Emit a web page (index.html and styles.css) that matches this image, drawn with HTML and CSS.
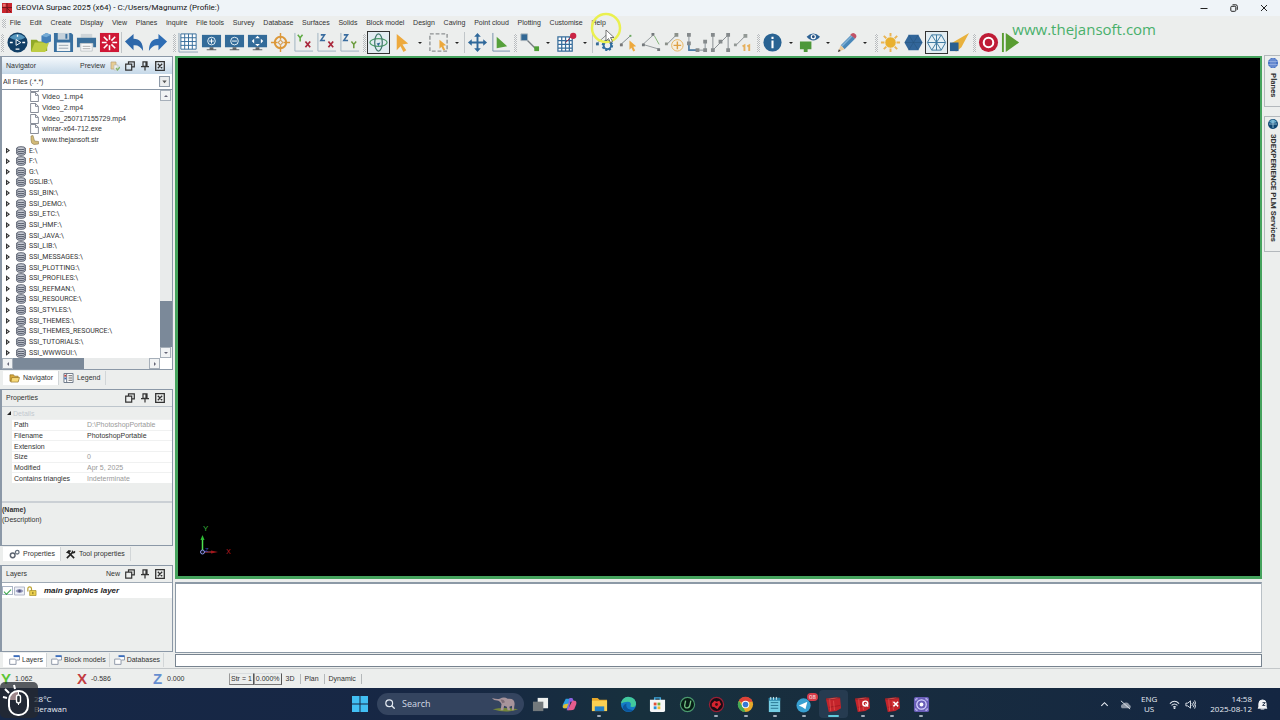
FILE: index.html
```html
<!DOCTYPE html>
<html lang="en">
<head>
    <meta charset="UTF-8">
    <meta name="viewport" content="width=device-width, initial-scale=1.0">
    <title>GEOVIA Surpac 2025</title>
    <link rel="stylesheet" href="styles.css">
</head>
<body>
    <!-- shared icons -->
    <svg class="sprite" aria-hidden="true">
        <symbol id="i-float" viewBox="0 0 10 10"><path d="M.7 3.2h6v6h-6zM3.5 3V.8h5.8v5H7M5 3.2h2" fill="none" stroke="#333" stroke-width="1.2"/></symbol>
        <symbol id="i-pin" viewBox="0 0 10 10"><path d="M3 .8h4v4.6H3zM1 5.7h8M5 5.7v3.8M6 1v4" fill="none" stroke="#333" stroke-width="1.2"/></symbol>
        <symbol id="i-close" viewBox="0 0 10 10"><path d="M.7.7h8.6v8.6H.7zM2.8 2.8l4.4 4.4M7.2 2.8L2.8 7.2" fill="none" stroke="#333" stroke-width="1.3"/></symbol>
        <symbol id="i-file" viewBox="0 0 9 10"><path d="M.6.5h5l2.8 2.8v6.2H.6zM5.5.6v2.8h2.8" fill="#fff" stroke="#6c7280" stroke-width=".8"/></symbol>
        <symbol id="i-str" viewBox="0 0 9 10"><path d="M1 1l2-.5L4.500 6l4 .5V9L4 9.500Q1 9 1 5z" fill="#d3bb78" stroke="#8f7c4b" stroke-width=".6"/></symbol>
        <symbol id="i-disk" viewBox="0 0 10 10"><path d="M.7 2.200q0-1.500 4.300-1.500t4.300 1.500v5.600q0 1.500-4.300 1.500T.7 7.800z" fill="#c6cad3"/><path d="M.7 2.200q0-1.500 4.300-1.500t4.300 1.500-4.300 1.500T.7 2.200v5.600q0 1.500 4.300 1.500t4.300-1.500V2.200M.7 4.200q0 1.500 4.300 1.500t4.300-1.500M.7 6q0 1.500 4.300 1.500T9.300 6" fill="none" stroke="#4c5262" stroke-width=".9"/></symbol>
        <symbol id="i-window" viewBox="0 0 12 11"><path d="M.7 4.500h7v5.800h-7z" fill="#fff" stroke="#8993a3"/><path d="M5 1h6.500v4.500H8" fill="#fff" stroke="#8993a3"/><path d="M5 .3h6.500v2H5z" fill="#3a6ec0"/></symbol>
        <symbol id="i-monitor" viewBox="0 0 22 22"><path d="M1 3h20v13H1z" fill="#336b99"/><path d="M9 16h4v2h3v1H6v-1h3z" fill="#606468"/></symbol>
        <symbol id="i-surpac" viewBox="0 0 18 18"><path d="M1 3l4 1 11-2 1 11-5 3-8 1z" fill="#c4242b"/><path d="M1 3l11-1.500 4 .5L5 4zM4 12l12-2" fill="#ef6a66" stroke="#8d151b" stroke-width=".6"/><path d="M5 4l1 12M9 5l1 10" stroke="#e95a55" stroke-width=".7"/></symbol>
    </svg>

    <header class="titlebar">
        <svg class="app-icon" viewBox="0 0 11 11"><path d="M0 0h11v11H0z" fill="#c9252e"/><path d="M0 5h11M5.500 0v11M5 5l5 5" stroke="#6d151a"/><path d="M1 1h3v3H1z" fill="#e86f6d"/></svg>
        <span class="title">GEOVIA Surpac 2025 (x64) - C:/Users/Magnumz (Profile:)</span>
        <div class="window-buttons">
            <button aria-label="Minimize"><svg viewBox="0 0 8 8"><path d="M.5 4.500h7" stroke="#222"/></svg></button>
            <button aria-label="Restore"><svg viewBox="0 0 8 8"><rect x=".8" y="2.300" width="5" height="5" rx="1" fill="none" stroke="#222"/><path d="M2.500.8h3.300q1.500 0 1.500 1.500v3.500" fill="none" stroke="#222"/></svg></button>
            <button aria-label="Close"><svg viewBox="0 0 8 8"><path d="M1 1l6 6M7 1L1 7" stroke="#222"/></svg></button>
        </div>
    </header>

    <nav class="menubar">
        <i class="handle"></i>
        <button>File</button><button>Edit</button><button>Create</button><button>Display</button><button>View</button><button>Planes</button><button>Inquire</button><button>File tools</button><button>Survey</button><button>Database</button><button>Surfaces</button><button>Solids</button><button>Block model</button><button>Design</button><button>Caving</button><button>Point cloud</button><button>Plotting</button><button>Customise</button><button>Help</button>
    </nav>

    <div class="toolbar">
        <div class="tools">
            <i class="handle"></i>
            <button aria-label="3DEXPERIENCE"><svg viewBox="0 0 22 22"><circle cx="11" cy="11" r="10.500" fill="#123f66"/><path d="M3 6a10 10 0 0 1 16 0q-8 5-16 0z" fill="#5596bd"/><path d="M9.500 8v6l5-3z" fill="none" stroke="#fff"/><path d="M3 11h3M16 11h3M11 3v2M9 18h4" stroke="#fff" stroke-width="1.400"/></svg></button>
            <button aria-label="Open"><svg viewBox="0 0 22 22"><path d="M1 8h6l2 2h9v10H1z" fill="#91a928"/><path d="M5 11h15l-4 10H1z" fill="#bfcd43"/><path d="M12 4l5-3 5 2v7l-5 2-5-2z" fill="#4580b9"/><path d="M12 4l5-3 5 2-5 2.500z" fill="#75aad5"/></svg></button>
            <button aria-label="Save"><svg viewBox="0 0 22 22"><path d="M1 1h18l2 2v18H1z" fill="#386f9f"/><path d="M5 1h12v7H5z" fill="#c5d1da"/><path d="M13 2h2v5h-2z" fill="#386f9f"/><path d="M4 11h14v9H4z" fill="#f0f3f4"/><path d="M6 14h10M6 17h10" stroke="#9aa7b0"/></svg></button>
            <button aria-label="Print"><svg viewBox="0 0 22 22"><path d="M5 2h12v4H5z" fill="#cfd5d8"/><path d="M1 6h20v10h-3v-4H4v4H1z" fill="#3a6f9b"/><path d="M5 12h12v8H5z" fill="#fafafa" stroke="#c0c6ca"/><path d="M7 15h8M7 17.500h8" stroke="#aaa"/></svg></button>
            <button aria-label="Reset graphics"><svg viewBox="0 0 22 22"><path d="M1 1h20v20H1z" fill="#cf1735"/><path d="M11 3v5M11 14v5M3 11h5M14 11h5M5 5l4 4M13 13l4 4M17 5l-4 4M9 13l-4 4" stroke="#fff" stroke-width="1.600"/></svg></button>
            <i class="sep"></i>
            <button aria-label="Undo"><svg viewBox="0 0 22 22"><path d="M1 10l9-8v5q10 0 10 13-4-7-10-6v5z" fill="#2e68aa"/></svg></button>
            <button aria-label="Redo"><svg viewBox="0 0 22 22"><path d="M21 10l-9-8v5Q2 7 2 20q4-7 10-6v5z" fill="#2e6db4"/></svg></button>
        </div>
        <div class="tools">
            <i class="handle"></i>
            <button aria-label="Grid"><svg viewBox="0 0 22 22"><path d="M3 2h16v16H3zM7 2v16M11 2v16M15 2v16M3 6h16M3 10h16M3 14h16" fill="#fff" stroke="#376d9b"/><path d="M1 1v20h20" fill="none" stroke="#8ea4b6"/></svg></button>
            <button aria-label="Zoom in"><svg viewBox="0 0 22 22"><use href="#i-monitor"/><circle cx="11" cy="9.500" r="4" fill="none" stroke="#e6f1f8"/><path d="M11 7v5M8.500 9.500h5" stroke="#fff"/></svg></button>
            <button aria-label="Zoom out"><svg viewBox="0 0 22 22"><use href="#i-monitor"/><circle cx="11" cy="9.500" r="4" fill="none" stroke="#e6f1f8"/><path d="M8.500 9.500h5" stroke="#fff"/></svg></button>
            <button aria-label="Zoom all"><svg viewBox="0 0 22 22"><use href="#i-monitor"/><path d="M11 4l2.500 2.500h-5zM11 15l2.500-2.500h-5zM5 9.500L7.500 7v5zM17 9.500L14.500 7v5z" fill="#fff"/></svg></button>
            <button aria-label="Centre view"><svg viewBox="0 0 22 22"><circle cx="11" cy="11" r="6" fill="none" stroke="#dc983a" stroke-width="2"/><circle cx="11" cy="11" r="2" fill="none" stroke="#cd862a"/><path d="M11 1v7M11 14v7M1 11h7M14 11h7" stroke="#dc983a" stroke-width="1.500"/></svg></button>
            <button aria-label="YX view"><svg viewBox="0 0 22 22"><path d="M2 1v19h19" fill="none" stroke="#9eb2c0"/><path d="M5 3l2.500 3L10 3M7.500 6v4" fill="none" stroke="#5eaa43" stroke-width="1.600"/><path d="M13 10l5 6M18 10l-5 6" stroke="#a9273b" stroke-width="1.800"/></svg></button>
            <button aria-label="ZX view"><svg viewBox="0 0 22 22"><path d="M2 1v19h19" fill="none" stroke="#9eb2c0"/><path d="M5 3h4L5 9h4.500" fill="none" stroke="#3a6da0" stroke-width="1.600"/><path d="M13 10l5 6M18 10l-5 6" stroke="#a9273b" stroke-width="1.800"/></svg></button>
            <button aria-label="ZY view"><svg viewBox="0 0 22 22"><path d="M2 1v19h19" fill="none" stroke="#9eb2c0"/><path d="M5 3h4L5 9h4.500" fill="none" stroke="#3a6da0" stroke-width="1.600"/><path d="M13 10l2.500 3 2.500-3M15.500 13v4" fill="none" stroke="#6b9c3d" stroke-width="1.600"/></svg></button>
        </div>
        <div class="tools">
            <i class="handle"></i>
            <button class="active" aria-label="Orbit"><svg viewBox="0 0 22 22"><ellipse cx="11" cy="11" rx="9" ry="4" fill="none" stroke="#4c9e69" stroke-width="1.300"/><ellipse cx="11" cy="11" rx="4" ry="9" fill="none" stroke="#43796e" stroke-width="1.300"/><path d="M9 12l4-1-2 4z" fill="#356b98"/></svg></button>
            <button aria-label="Select"><svg viewBox="0 0 22 22"><path d="M6 2l12 10-6 1 4 6-3 2-3-6-4 4z" fill="#eda93d"/></svg></button>
            <button class="drop" aria-label="Select options"></button>
            <button aria-label="Area select"><svg viewBox="0 0 22 22"><path d="M2 2h18v18H2z" fill="none" stroke="#8d9193" stroke-width="1.400" stroke-dasharray="4 2"/><path d="M12 8l7 6-3 .500 2 4-2 1-2-4-2 2z" fill="#eda93d"/></svg></button>
            <button class="drop" aria-label="Area options"></button>
            <i class="sep"></i>
            <button aria-label="Move"><svg viewBox="0 0 22 22"><path d="M11 1l3.500 4H12v5h5V7.500l4 3.500-4 3.500V12h-5v5h2.500L11 21l-3.500-4H10v-5H5v2.500L1 11l4-3.500V10h5V5H7.500z" fill="#2f689a"/></svg></button>
            <button aria-label="View plane"><svg viewBox="0 0 22 22"><path d="M3 1v19h18" fill="none" stroke="#7590aa"/><path d="M7 5l11 10-11 2z" fill="#56a13b"/></svg></button>
        </div>
        <div class="tools">
            <i class="handle"></i>
            <button aria-label="Snap"><svg viewBox="0 0 22 22"><path d="M5 5l13 13" stroke="#747b80" stroke-width="1.400"/><path d="M2 2h7v7H2z" fill="#326895" stroke="#a8b4bc"/><path d="M16 15h5v5h-5z" fill="#4fa037"/></svg></button>
            <button class="drop" aria-label="Snap options"></button>
            <button aria-label="Grid snap"><svg viewBox="0 0 22 22"><path d="M2 5h15v15H2zM6 5v15M10 5v15M14 5v15M2 9h15M2 13h15M2 17h15" fill="#fff" stroke="#376d9b" stroke-width="1.300"/><path d="M10 11l7-7" stroke="#a8324b"/><circle cx="18" cy="4" r="3.300" fill="#ca2544"/></svg></button>
            <button class="drop" aria-label="Grid options"></button>
            <i class="sep"></i>
            <button aria-label="Segment settings"><svg viewBox="0 0 22 22"><path d="M2 12L12 3" stroke="#828a8e"/><path d="M1 11h3v3H1z" fill="#396c97"/><circle cx="13" cy="14" r="4.500" fill="none" stroke="#316e9f" stroke-width="3" stroke-dasharray="2 1.500"/><circle cx="13" cy="14" r="4" fill="none" stroke="#316e9f" stroke-width="2"/></svg></button>
            <button aria-label="Segment select"><svg viewBox="0 0 22 22"><path d="M3 13L13 4" stroke="#828a8e"/><path d="M2 12h3v3H2z" fill="#777"/><path d="M12 3h2v2h-2z" fill="#67a65b"/><path d="M12 9l7 6-3 .500 2 4-2 1-2-4-2 2z" fill="#eda93d"/></svg></button>
            <button aria-label="Open segment"><svg viewBox="0 0 22 22"><path d="M13 3L2 13l17 5" fill="none" stroke="#919799"/><path d="M11 1h3v3h-3zM1 12h3v3H1zM17 17h3v3h-3z" fill="#74797c"/><path d="M14 4l5 9" stroke="#82b276"/></svg></button>
            <button aria-label="Add segment"><svg viewBox="0 0 22 22"><path d="M3 13L13 3" stroke="#828a8e"/><path d="M1 11h3v3H1zM11 1h4v4h-4z" fill="#8b918a"/><circle cx="14" cy="14" r="6" fill="#f5eee0" stroke="#e5b463"/><path d="M14 10v8M10 14h8" stroke="#dfa044" stroke-width="1.500"/></svg></button>
            <button aria-label="Join segment"><svg viewBox="0 0 22 22"><path d="M2 3v16h17V9" fill="none" stroke="#869097"/><path d="M2 12v7h9" fill="none" stroke="#4d7da7" stroke-width="1.600"/><path d="M0 1h4v4H0zM0 10h4v4H0zM9 17h4v4H9zM17 8h4v4h-4zM17 17h4v4h-4z" fill="#858a8c"/></svg></button>
            <button aria-label="Break segment"><svg viewBox="0 0 22 22"><path d="M3 19V3M19 3v16M3 19L19 3" fill="none" stroke="#858c90"/><path d="M1 1h4v4H1zM1 17h4v4H1zM9 8h4v4H9zM17 1h4v4h-4zM17 17h4v4h-4z" fill="#858a8c"/></svg></button>
            <button aria-label="Number points"><svg viewBox="0 0 22 22"><path d="M3 14L13 4" stroke="#858c90"/><path d="M1 12h3v3H1zM11 2h4v4h-4z" fill="#939996"/><path d="M10 15l2-1v6M15 15l2-1v6" fill="none" stroke="#e6b05e" stroke-width="2"/></svg></button>
        </div>
        <div class="tools">
            <i class="handle"></i>
            <button aria-label="Identify"><svg viewBox="0 0 22 22"><circle cx="11" cy="11" r="9.500" fill="#296393"/><path d="M11 9v8M11 5v2.300" stroke="#fff" stroke-width="2.200"/></svg></button>
            <button class="drop" aria-label="Identify options"></button>
            <button aria-label="Visibility"><svg viewBox="0 0 22 22"><path d="M1 10h12v8H1zM5 18h4v3H5z" fill="#4d9839"/><path d="M8 5q7-7 14 0-7 8-14 0z" fill="#2e6294"/><circle cx="15" cy="5" r="2.700" fill="#fff"/><circle cx="15" cy="5" r="1.500" fill="#244b78"/></svg></button>
            <button class="drop" aria-label="Visibility options"></button>
            <button aria-label="Edit"><svg viewBox="0 0 22 22"><path d="M5 14L16 3l4 4L9 18z" fill="#4a88b9"/><path d="M6 15L17 4" stroke="#82b1d5" stroke-width="1.600"/><path d="M5 14l4 4-7 3z" fill="#eccb9d"/><path d="M2 21l1-3 2 2z" fill="#333"/><path d="M15 3q3-4 6 0 1 2-1 4l-5-4z" fill="#c15367"/></svg></button>
            <button class="drop" aria-label="Edit options"></button>
        </div>
        <div class="tools">
            <i class="handle"></i>
            <button aria-label="Lighting"><svg viewBox="0 0 22 22"><path d="M11 1v20M1 11h20M4 4l14 14M18 4L4 18" stroke="#eab454" stroke-width="2"/><circle cx="11" cy="11" r="6" fill="#e9b02f" stroke="#eceeed"/></svg></button>
            <button aria-label="Solid render"><svg viewBox="0 0 22 22"><path d="M6 3h10l4.500 8-4.500 8H6l-4.500-8z" fill="#32669a"/><path d="M6 3l10 16M16 3L6 19M2 11h18" stroke="#27547e" stroke-width=".600"/></svg></button>
            <button class="active" aria-label="Wireframe"><svg viewBox="0 0 22 22"><path d="M6 3h10l4.500 8-4.500 8H6l-4.500-8zM6 3l10 16M16 3L6 19M2 11h18M11 3v16" fill="#e5f0f5" stroke="#3b779e"/></svg></button>
            <button aria-label="Clip"><svg viewBox="0 0 22 22"><path d="M21 1L2 12l6 1-1 8 6-5z" fill="#e8b13d"/><path d="M1 11h9v9H1z" fill="#295f91"/></svg></button>
        </div>
        <div class="tools">
            <i class="handle"></i>
            <button aria-label="Record"><svg viewBox="0 0 22 22"><circle cx="11" cy="11" r="10" fill="#bf1c36"/><circle cx="11" cy="11" r="5" fill="#bf1c36" stroke="#fff" stroke-width="2.200"/></svg></button>
            <button aria-label="Play"><svg viewBox="0 0 22 22"><path d="M2 1v20" stroke="#599c31" stroke-width="2"/><path d="M5 1v20l14-10z" fill="#599c31"/></svg></button>
        </div>
    </div>

    <main class="workspace">
        <aside class="sidebar">
            <section class="panel navigator">
                <div class="panel-head focused">
                    <h2>Navigator</h2>
                    <button>Preview</button>
                    <button class="tool" aria-label="Paste"><svg viewBox="0 0 10 10"><path d="M1 1h5v7H1z" fill="#e6cd94" stroke="#b9a276" stroke-width=".700"/><path d="M4 4h4v5H4z" fill="#eef1ed" stroke="#bbb" stroke-width=".700"/><path d="M6 7l1.500 2L10 6" fill="none" stroke="#82b56b" stroke-width="1.300"/></svg></button>
                    <button class="tool" aria-label="Float"><svg><use href="#i-float"/></svg></button>
                    <button class="tool" aria-label="Pin"><svg><use href="#i-pin"/></svg></button>
                    <button class="tool" aria-label="Close"><svg><use href="#i-close"/></svg></button>
                </div>
                <div class="filter">
                    <select aria-label="File filter"><option>All Files (.*.*)</option></select>
                    <svg viewBox="0 0 10 10"><path d="M.500.500h9v9h-9z" fill="#eceeef" stroke="#8e9aa8"/><path d="M3 4h4L5 6.500z" fill="#555"/></svg>
                </div>
                <div class="tree-area">
                    <ul class="tree">
                        <li class="file clipped"><svg><use href="#i-file"/></svg></li>
                        <li class="file"><svg><use href="#i-file"/></svg>Video_1.mp4</li>
                        <li class="file"><svg><use href="#i-file"/></svg>Video_2.mp4</li>
                        <li class="file"><svg><use href="#i-file"/></svg>Video_250717155729.mp4</li>
                        <li class="file"><svg><use href="#i-file"/></svg>winrar-x64-712.exe</li>
                        <li class="file"><svg><use href="#i-str"/></svg>www.thejansoft.str</li>
                        <li class="drive"><svg><use href="#i-disk"/></svg>E:\</li>
                        <li class="drive"><svg><use href="#i-disk"/></svg>F:\</li>
                        <li class="drive"><svg><use href="#i-disk"/></svg>G:\</li>
                        <li class="drive"><svg><use href="#i-disk"/></svg>GSLIB:\</li>
                        <li class="drive"><svg><use href="#i-disk"/></svg>SSI_BIN:\</li>
                        <li class="drive"><svg><use href="#i-disk"/></svg>SSI_DEMO:\</li>
                        <li class="drive"><svg><use href="#i-disk"/></svg>SSI_ETC:\</li>
                        <li class="drive"><svg><use href="#i-disk"/></svg>SSI_HMF:\</li>
                        <li class="drive"><svg><use href="#i-disk"/></svg>SSI_JAVA:\</li>
                        <li class="drive"><svg><use href="#i-disk"/></svg>SSI_LIB:\</li>
                        <li class="drive"><svg><use href="#i-disk"/></svg>SSI_MESSAGES:\</li>
                        <li class="drive"><svg><use href="#i-disk"/></svg>SSI_PLOTTING:\</li>
                        <li class="drive"><svg><use href="#i-disk"/></svg>SSI_PROFILES:\</li>
                        <li class="drive"><svg><use href="#i-disk"/></svg>SSI_REFMAN:\</li>
                        <li class="drive"><svg><use href="#i-disk"/></svg>SSI_RESOURCE:\</li>
                        <li class="drive"><svg><use href="#i-disk"/></svg>SSI_STYLES:\</li>
                        <li class="drive"><svg><use href="#i-disk"/></svg>SSI_THEMES:\</li>
                        <li class="drive"><svg><use href="#i-disk"/></svg>SSI_THEMES_RESOURCE:\</li>
                        <li class="drive"><svg><use href="#i-disk"/></svg>SSI_TUTORIALS:\</li>
                        <li class="drive"><svg><use href="#i-disk"/></svg>SSI_WWWGUI:\</li>
                    </ul>
                    <div class="scroll vertical"><button aria-label="Scroll up"></button><i class="thumb"></i><button class="end" aria-label="Scroll down"></button></div>
                    <div class="scroll horizontal"><button aria-label="Scroll left"></button><i class="thumb"></i><button class="end" aria-label="Scroll right"></button></div>
                </div>
            </section>
            <div class="tabs">
                <button class="current"><svg viewBox="0 0 12 11"><path d="M1 2h4l1 1.500h4V9H1z" fill="#d9aa3b" stroke="#8f6d22" stroke-width=".700"/><path d="M3 5h8.500L10 10H2z" fill="#f7d979" stroke="#8f6d22" stroke-width=".700"/></svg>Navigator</button>
                <button><svg viewBox="0 0 12 11"><path d="M1 .500h10v10H1zM4 .500v10" fill="#fff" stroke="#627080"/><path d="M6 3h4M6 5.500h4M6 8h4" stroke="#555"/><path d="M1.500 2h2v2h-2z" fill="#c43a37"/><path d="M1.500 5h2v2h-2z" fill="#3c67b4"/></svg>Legend</button>
            </div>

            <section class="panel properties">
                <div class="panel-head">
                    <h2>Properties</h2>
                    <button class="tool" aria-label="Float"><svg><use href="#i-float"/></svg></button>
                    <button class="tool" aria-label="Pin"><svg><use href="#i-pin"/></svg></button>
                    <button class="tool" aria-label="Close"><svg><use href="#i-close"/></svg></button>
                </div>
                <div class="details-title">Details</div>
                <table>
                    <tr><th>Path</th><td>D:\PhotoshopPortable</td></tr>
                    <tr><th>Filename</th><td class="editable">PhotoshopPortable</td></tr>
                    <tr><th>Extension</th><td></td></tr>
                    <tr><th>Size</th><td>0</td></tr>
                    <tr><th>Modified</th><td>Apr 5, 2025</td></tr>
                    <tr><th>Contains triangles</th><td>Indeterminate</td></tr>
                </table>
                <div class="description"><strong>(Name)</strong><p>(Description)</p></div>
            </section>
            <div class="tabs">
                <button class="current"><svg viewBox="0 0 12 11"><circle cx="4" cy="7" r="2.600" fill="none" stroke="#5d6570" stroke-width="1.600"/><circle cx="9" cy="3.500" r="2" fill="none" stroke="#66717e" stroke-width="1.400"/></svg>Properties</button>
                <button><svg viewBox="0 0 12 11"><path d="M2 10l7-7M3 3l7 7" stroke="#222" stroke-width="1.800"/><path d="M1 4l3-3 3 1-3 3zM8 1l1 2 2-1q1 3-2 3L7 4z" fill="#222"/></svg>Tool properties</button>
            </div>

            <section class="panel layers">
                <div class="panel-head">
                    <h2>Layers</h2>
                    <button>New</button>
                    <button class="tool" aria-label="Float"><svg><use href="#i-float"/></svg></button>
                    <button class="tool" aria-label="Pin"><svg><use href="#i-pin"/></svg></button>
                    <button class="tool" aria-label="Close"><svg><use href="#i-close"/></svg></button>
                </div>
                <div class="layer">
                    <input type="checkbox" id="main-layer" checked>
                    <svg viewBox="0 0 11 9"><path d="M.500.500h10v8H.500z" fill="#edf0f7" stroke="#b3b8c8"/><path d="M1.500 4.500q4-4 8 0-4 4-8 0z" fill="#8d90b8"/><circle cx="5.500" cy="4.500" r="1.300" fill="#54567f"/></svg>
                    <svg viewBox="0 0 11 11"><path d="M1.500 6V3q0-2 2-2t2 2v3" fill="none" stroke="#b8a02c" stroke-width="1.300"/><path d="M3.500 5h7v5.500h-7z" fill="#ecd151" stroke="#a68f25" stroke-width=".800"/><path d="M7 6.500v2.500" stroke="#705f17"/></svg>
                    <label for="main-layer">main graphics layer</label>
                </div>
            </section>
            <div class="tabs narrow">
                <button class="current"><svg><use href="#i-window"/></svg>Layers</button>
                <button><svg><use href="#i-window"/></svg>Block models</button>
                <button><svg><use href="#i-window"/></svg>Databases</button>
            </div>
        </aside>

        <section class="stage">
            <div class="viewport">
                <svg class="axes" viewBox="0 0 40 40">
                    <text x="8" y="9" class="axis-y">Y</text>
                    <path d="M7.500 29V16" stroke="#4ee04e" stroke-width="1.500"/><path d="M5.500 18l2-5 2 5z" fill="#2fba35"/>
                    <path d="M9 30h8" stroke="#c9474c"/><path d="M16 28.500l7 1.500-7 1.500z" fill="#a3171c"/>
                    <circle cx="7.500" cy="30" r="2" fill="#112" stroke="#8a96e8"/>
                    <text x="10" y="30" class="axis-z">Z</text>
                    <text x="31" y="32" class="axis-x">X</text>
                </svg>
            </div>
            <div class="messages" role="log"></div>
            <input class="command" type="text" aria-label="Command">
        </section>

        <nav class="side-tabs">
            <button><svg viewBox="0 0 10 10"><path d="M3 0h4l3 3v4l-3 3H3L0 7V3z" fill="#4d76c5"/><path d="M3 1v8M5 0v10M7 1v8M0 3.500h10M0 6.500h10" stroke="#a9bee8" stroke-width=".600"/></svg>Planes</button>
            <button><svg viewBox="0 0 10 10"><circle cx="5" cy="5" r="5" fill="#0f4672"/><path d="M1 3q4-5 8 0-4 2-8 0z" fill="#67aacb"/><path d="M1 5h8M5 1v8" stroke="#a9d2e4" stroke-width=".800"/></svg>3DEXPERIENCE PLM Services</button>
        </nav>
    </main>

    <footer class="statusbar">
        <div class="coord"><b class="y">Y</b>1.062</div>
        <div class="coord"><b class="x">X</b>-0.586</div>
        <div class="coord"><b class="z">Z</b>0.000</div>
        <button class="raised">Str = 1</button><button class="raised">0.000%</button>
        <span class="mode">3D</span><span class="mode">Plan</span><span class="mode">Dynamic</span>
    </footer>

    <div class="taskbar">
        <div class="weather"><span>28°C</span><span>Berawan</span></div>
        <div class="apps">
            <button class="start" aria-label="Start"><svg viewBox="0 0 16 16"><path d="M0 0h7.500v7.500H0zM8.500 0H16v7.500H8.500zM0 8.500h7.500V16H0zM8.500 8.500H16V16H8.500z" fill="#42bff3"/></svg></button>
            <div class="search">
                <svg viewBox="0 0 10 10"><circle cx="4.200" cy="4.200" r="3.400" fill="none" stroke="#e2e8f0" stroke-width="1.200"/><path d="M6.700 6.700l3 3" stroke="#e2e8f0" stroke-width="1.300"/></svg>
                <input type="text" placeholder="Search" aria-label="Search">
                <svg class="elephant" viewBox="0 0 32 18"><path d="M2 15q12-3 29 0-13 5-29 0z" fill="#76883a"/><path d="M1 2q6 2 9 1 5-3 9 0 8-1 8 6l-1 7h-2v-5l-3 1 1 4h-3l-1-4-3-1-1 5h-3l1-7q-2-4-5-4Q3 5 1 2z" fill="#a8949b"/><path d="M11 4q4-1 5 3l-3 1z" fill="#7f6d78"/></svg>
            </div>
            <div class="pinned">
                <button aria-label="Task view"><svg viewBox="0 0 18 18"><path d="M6 2h11v11H6z" fill="#eef0ef"/><path d="M1 6h11v10H1z" fill="#73797c"/></svg></button>
                <button aria-label="Copilot"><svg viewBox="0 0 18 18"><path d="M5 3h5L7 13H3Q1 13 2 9z" fill="#2d9de1"/><path d="M9 2h3l2 4h-4L8 15H6z" fill="#8c62e0"/><path d="M12 5h3q2 1 1 4l-2 5q-1 1-4 1H7z" fill="#e65c8d"/><path d="M3 9l5-1-2 5H3q-2-1 0-4z" fill="#e2bd33"/></svg></button>
                <button class="open" aria-label="File Explorer"><svg viewBox="0 0 18 18"><path d="M1 2h6l2 2h8v12H1z" fill="#e8a92a"/><path d="M1 5h16v11H1z" fill="#fad052"/><path d="M4 11h10v5H4z" fill="#2582c7"/></svg></button>
                <button aria-label="Edge"><svg viewBox="0 0 18 18"><circle cx="9" cy="9" r="8" fill="#147bc5"/><path d="M1 8q2-8 9-7 7 1 7 8-1 4-6 2 2-5-3-5-4 0-7 2z" fill="#42c89c"/><path d="M7 8q-2 6 7 7-7 4-11-2 0-4 4-5z" fill="#0c559d"/></svg></button>
                <button aria-label="Store"><svg viewBox="0 0 18 18"><path d="M6 5V2h6v3" fill="none" stroke="#3fa7dd" stroke-width="1.500"/><path d="M1 4h16v11q0 2-2 2H3q-2 0-2-2z" fill="#f5f6f7"/><path d="M5 7h3v3H5z" fill="#e25238"/><path d="M9 7h3v3H9z" fill="#72ae3c"/><path d="M5 11h3v3H5z" fill="#288fd4"/><path d="M9 11h3v3H9z" fill="#eebc34"/></svg></button>
                <button aria-label="Uninstaller"><svg viewBox="0 0 18 18"><circle cx="9" cy="9" r="7.500" fill="#071d16" stroke="#4a996e" stroke-width="1.200"/><path d="M7 5l-1 5q0 3 3 2.500 2 0 2.500-2.500l1-5" fill="none" stroke="#75c484" stroke-width="1.400"/></svg></button>
                <button class="open" aria-label="Recorder"><svg viewBox="0 0 18 18"><circle cx="9" cy="9" r="7.500" fill="#180c14" stroke="#982036" stroke-width="1.300"/><path d="M4 8l3-3 2 1 3-1 2 4-2 2-2 3-3-2-3-1z" fill="#d5232f"/><circle cx="9" cy="9" r="1.500" fill="#3b0d13"/></svg></button>
                <button class="open" aria-label="Chrome"><svg viewBox="0 0 18 18"><circle cx="9" cy="9" r="8" fill="#e6a92a"/><path d="M2 5a8 8 0 0 1 14.500 1H9v3z" fill="#dc4238"/><path d="M2 5l5 8 2 4A8 8 0 0 1 2 5z" fill="#43a957"/><circle cx="9" cy="9" r="4" fill="#fff"/><circle cx="9" cy="9" r="3" fill="#3778d5"/></svg></button>
                <button class="open" aria-label="Notepad"><svg viewBox="0 0 18 18"><path d="M3 2h12v15H3z" fill="#75cee4"/><path d="M3 2h12v3H3z" fill="#2d87aa"/><path d="M5 7h8M5 10h8M5 13h8" stroke="#28758f"/><path d="M5 1v3M8 1v3M11 1v3" stroke="#d1edf4"/></svg></button>
                <button class="open" aria-label="Telegram"><svg viewBox="0 0 18 18"><circle cx="8" cy="10" r="7.500" fill="#38a0d1"/><path d="M3 10l9-4-2 8-3-2z" fill="#fff"/></svg><span class="badge">08</span></button>
                <button class="open selected" aria-label="Surpac"><svg><use href="#i-surpac"/></svg></button>
                <button class="open" aria-label="Surpac Quarry"><svg viewBox="0 0 18 18"><use href="#i-surpac"/><circle cx="12" cy="8" r="2.600" fill="none" stroke="#fff" stroke-width="1.500"/><path d="M12 8l3 3" stroke="#fff" stroke-width="1.500"/></svg></button>
                <button class="open" aria-label="Surpac X"><svg viewBox="0 0 18 18"><use href="#i-surpac"/><path d="M10 6l5 5M15 6l-5 5" stroke="#fff" stroke-width="1.600"/></svg></button>
                <button class="open" aria-label="Capture"><svg viewBox="0 0 18 18"><rect x="1" y="1" width="16" height="16" rx="2" fill="#695eb8"/><circle cx="9" cy="9" r="5" fill="none" stroke="#d8d5ff" stroke-width="1.300"/><circle cx="9" cy="9" r="2" fill="#fff"/><path d="M3 5V3h2M13 3h2v2M15 13v2h-2M5 15H3v-2" fill="none" stroke="#d8d5ff"/></svg></button>
            </div>
        </div>
        <div class="tray">
            <svg viewBox="0 0 12 12"><path d="M2.500 7.500L6 4l3.500 3.500" fill="none" stroke="#e6ebf2" stroke-width="1.200"/></svg>
            <svg class="cloud" viewBox="0 0 12 12"><path d="M2 10q-2-2 0-4 2-1 3-2 4-1 5 2 3 2 1 4z" fill="#8c96a5"/><path d="M1 2l10 9" stroke="#e6ebf2"/></svg>
            <div class="lang">ENG<br>US</div>
            <svg viewBox="0 0 12 12"><path d="M1 5q5-5 10 0M2.800 7q3.200-3 6.400 0M4.500 8.800q1.500-1.300 3 0" fill="none" stroke="#e6ebf2" stroke-width="1.100"/><circle cx="6" cy="10" r="1" fill="#e6ebf2"/></svg>
            <svg viewBox="0 0 12 12"><path d="M1 4.500h2L6 2v8L3 7.500H1zM7.500 4.500q1.500 1.500 0 3M9 3q2.500 3 0 6M10.500 1.500q3 4.500 0 9" fill="none" stroke="#e6ebf2"/></svg>
            <div class="clock">14:58<br>2025-08-12</div>
            <svg viewBox="0 0 12 12"><path d="M2 9V5q0-4 4-4t4 4v4l1 1H1zM4 11h4" fill="#f2f4f7" stroke="#f2f4f7"/><path d="M6 4h3L6 7h3" fill="none" stroke="#172740"/></svg>
        </div>
    </div>

    <div class="watermark">www.thejansoft.com</div>
    <svg class="pointer" viewBox="0 0 32 32"><circle cx="16" cy="16" r="14" fill="none" stroke="#eaf04f" stroke-width="2.500"/><path d="M16 18v11l2.500-2.500 2 4 2-1-2-4h3.500z" fill="#fff" stroke="#555" stroke-width=".800"/></svg>
    <svg class="click-hint" viewBox="0 0 38 38"><rect width="38" height="36" rx="5" fill="#252a30" fill-opacity=".75"/><path d="M10 16q1-6 8-7v9h-8z" fill="#9c8589"/><rect x="9" y="9" width="19" height="24" rx="9" fill="none" stroke="#fff" stroke-width="2"/><path d="M18.500 9v4M18.500 20v3" stroke="#fff"/><rect x="16.500" y="13" width="4" height="8" rx="2" fill="#252a30" stroke="#fff" stroke-width="1.400"/><path d="M3 15l4 1M5 7l4 4M14 3l1 4" stroke="#fff" stroke-width="2"/></svg>
</body>
</html>
```
FILE: styles.css
```css
* { margin: 0; padding: 0; box-sizing: border-box; }
body { display: flex; flex-direction: column; height: 100vh; min-height: 720px; overflow: hidden; position: relative; background: #eceeed; color: #333; font-family: "Liberation Sans", Arial, sans-serif; font-size: 7px; line-height: 10px; }
button, input, select { font: inherit; color: inherit; background: none; border: none; }
svg { display: block; flex-shrink: 0; }
.sprite { position: absolute; width: 0; height: 0; }

.titlebar { display: flex; align-items: center; height: 16px; padding-left: 2px; background: #eff4f8; }
.app-icon { width: 10px; height: 10px; margin-right: 4px; }
.title { font-family: Roboto, sans-serif; font-size: 8px; color: #111; }
.window-buttons { display: flex; margin-left: auto; }
.window-buttons button { display: flex; justify-content: center; width: 30px; padding-right: 2px; }
.window-buttons svg { width: 8px; height: 8px; }

.menubar { display: flex; align-items: center; justify-content: space-between; width: 606px; height: 14px; padding-left: 2px; }
.menubar button { white-space: nowrap; }
.handle { flex: none; width: 3px; height: 18px; margin: 0 1px; background: repeating-conic-gradient(#b8bcbe 0 25%, #f1f2f2 0 50%) 0 0 / 2px 2px; }
.menubar .handle { width: 4px; height: 9px; margin: 0 -5px 0 0; }

.toolbar { display: grid; grid-template-columns: 172px 190px 151px 243px 118px 98px 1fr; height: 25px; }
.tools { display: flex; align-items: center; }
.tools:first-child .handle { margin-right: 2px; }
.tools button { display: flex; flex: none; align-items: center; justify-content: center; width: 23px; height: 23px; }
.tools svg { width: 21px; height: 21px; }
.tools .active { border: 1px solid #333; background: #e2ecf1; }
.tools .drop { width: 14px; }
.drop::after { content: ""; border: 2px solid transparent; border-top-color: #222; border-bottom: 0; }
.sep { flex: none; width: 1px; height: 21px; margin-right: 1px; background: #c1c6c9; }

.workspace { display: grid; grid-template-columns: 173px 1fr 16px; flex: 1; gap: 2px; min-height: 0; }
.sidebar { display: flex; flex-direction: column; min-width: 0; padding-top: 1px; }
.panel { display: flex; flex-direction: column; border: 1px solid #8b98a7; border-left-width: 2px; }
.navigator { flex: 1; min-height: 0; }
.panel-head { display: flex; flex: none; align-items: center; gap: 5px; height: 17px; padding: 0 7px 0 4px; }
.panel-head.focused { background: linear-gradient(#f5f9fc, #c5d8e8); }
.panel-head h2 { margin-right: auto; font-size: 7px; font-weight: normal; }
.panel-head svg { width: 10px; height: 10px; }

.filter { position: relative; flex: none; height: 16px; border-bottom: 1px solid #8996a5; background: #fff; }
.filter select { width: 100%; height: 15px; padding-left: 1px; appearance: none; }
.filter svg { position: absolute; top: 2px; right: 2px; width: 11px; height: 11px; pointer-events: none; }
.tree-area { display: grid; grid-template: 1fr 11px / 1fr 12px; flex: 1; min-height: 0; background: #fff; }
.tree { display: flex; flex-direction: column; overflow: hidden; list-style: none; }
.tree li { display: flex; flex: 1; align-items: center; min-height: 0; white-space: nowrap; }
.tree .clipped { flex: none; align-items: flex-end; height: 2px; overflow: hidden; }
.file { gap: 3px; padding-left: 28px; }
.file svg { width: 9px; height: 10px; }
.drive { gap: 3px; padding-left: 4px; font-family: Roboto, sans-serif; }
.drive svg { width: 10px; height: 10px; }
.drive::before { content: ""; width: 4px; height: 6px; margin-right: 3px; background: #333; clip-path: polygon(0 0, 100% 50%, 0 100%, 0 0, 1px 2px, 1px 4px, 2px 3px, 1px 2px); }
.scroll { display: flex; background: #e9ebeb; }
.scroll button { display: flex; flex: none; align-items: center; justify-content: center; width: 11px; height: 11px; border: 1px solid #a6afb9; background: #f1f3f4; }
.scroll button::after { content: ""; border: 2px solid transparent; border-top: 0; border-bottom-color: #667; }
.scroll .end { margin-top: auto; }
.scroll .thumb { background: #7b8999; }
.vertical { flex-direction: column; }
.vertical .thumb { height: 17%; margin-top: auto; }
.vertical .end { margin-top: 0; }
.vertical .end::after { transform: rotate(180deg); }
.horizontal .thumb { width: 45%; }
.horizontal .end { margin: 0 0 0 auto; }
.horizontal button::after { transform: rotate(-90deg); }
.horizontal .end::after { transform: rotate(90deg); }

.tabs { display: flex; flex: none; height: 14px; margin: 1px 0 4px 3px; }
.tabs button { display: flex; align-items: center; gap: 3px; padding: 0 5px 0 6px; border-right: 1px solid #d2d6d8; white-space: nowrap; }
.tabs .current { background: #fff; }
.tabs svg { width: 11px; height: 10px; }
.tabs button + button { padding-left: 4px; }
.tabs.narrow { margin-bottom: 1px; }
.tabs.narrow button { gap: 2px; padding-right: 3px; }

.properties { height: 157px; }
.properties .panel-head { border-bottom: 1px solid #bdc5cc; }
.details-title { height: 12px; padding-left: 11px; color: #c3c9cf; position: relative; line-height: 13px; }
.details-title::before { content: ""; position: absolute; left: 5px; top: 4px; border: 2px solid transparent; border-right-color: #222; border-bottom-color: #222; }
.properties table { flex: none; height: 64px; margin-left: 10px; background: #fff; border-collapse: collapse; line-height: 9px; }
.properties th { width: 74px; padding-left: 2px; font-weight: normal; text-align: left; border-top: 1px solid #f0f1f1; }
.properties td { padding-left: 1px; color: #999; border-top: 1px solid #f0f1f1; }
.properties .editable { color: #333; }
.description { height: 44px; margin-top: auto; border-top: 2px solid #cbd0d5; padding-top: 2px; }

.layers { height: 87px; }
.layers .panel-head { border-bottom: 1px solid #9faab5; }
.layer { display: flex; align-items: center; height: 15px; gap: 1px; background: #fff; }
.layer input { display: grid; place-items: center; width: 11px; height: 9px; border: 1px solid #aab5c6; appearance: none; background: #fff; }
.layer input:checked::before { content: ""; width: 6px; height: 3px; border: solid #35a447; border-width: 0 0 1px 1px; transform: rotate(-45deg); }
.layer svg { width: 11px; height: 10px; }
.layer label { margin-left: 6px; font-size: 8px; font-style: italic; font-weight: bold; color: #222; }

.stage { display: flex; flex-direction: column; min-width: 0; padding-top: 1px; }
.viewport { position: relative; flex: 1; border: 3px solid #45a35d; border-width: 2px 2px 3px 3px; background: #000; }
.axes { position: absolute; left: 17px; bottom: 14px; width: 40px; height: 40px; overflow: visible; }
.axis-y { fill: #37b43b; font-size: 8px; }
.axis-z { fill: #3f48bd; font-size: 6px; }
.axis-x { fill: #c01d23; font-size: 7px; }
.messages { height: 71px; margin-top: 3px; border: 1px solid #8c99a6; border-top-width: 2px; border-right-color: #b9c0c6; background: #fff; }
.command { width: 100%; height: 13px; margin: 1px 0; padding: 0 3px; border: 1px solid #77838f; background: #fff; }

.side-tabs { display: flex; flex-direction: column; gap: 9px; }
.side-tabs button { display: flex; align-items: center; gap: 5px; width: 16px; padding: 2px 0 9px; border: 1px solid #b3b8bc; border-right: 0; writing-mode: vertical-rl; font-family: Roboto, sans-serif; font-weight: bold; font-size: 8px; }
.side-tabs svg { width: 10px; height: 10px; }

.statusbar { display: flex; align-items: center; height: 20px; border-top: 1px solid #c3c7c9; padding-left: 1px; white-space: nowrap; }
.coord { display: flex; align-items: center; gap: 3px; width: 76px; }
.coord b { width: 11px; font-size: 15px; }
.coord .y { color: #5dc536; }
.coord .x { color: #c23c42; }
.coord .z { color: #668ed0; }
.raised { height: 12px; padding: 0 1px; border: 1px solid; border-color: #d9dddf #555 #777 #999; }
.mode { padding: 0 5px 0 4px; border-right: 1px solid #b4b8ba; }

.taskbar { display: grid; grid-template-columns: 1fr auto 1fr; align-items: center; height: 32px; background: linear-gradient(90deg, #162746, #172744 35%, #17303d 50%, #182d3e 65%, #142642); color: #e8edf4; font-family: "Open Sans", "Noto Sans", sans-serif; font-size: 8px; line-height: 10px; }
.weather { display: flex; flex-direction: column; padding-left: 34px; }
.apps { display: flex; align-items: center; padding-left: 4px; }
.start { width: 25px; padding-left: 4px; }
.start svg { width: 16px; height: 16px; }
.search { display: flex; align-items: center; gap: 7px; width: 147px; height: 22px; margin: 0 2px 0 4px; padding: 0 5px 0 8px; border-radius: 11px; background: #34445f; }
.search svg { width: 10px; height: 10px; }
.search .elephant { width: 28px; height: 18px; }
.search input { flex: 1; min-width: 0; font-size: 9px; }
.search input::placeholder { color: #d3dae5; opacity: 1; }
.pinned { display: grid; grid-template-columns: repeat(14, 1fr); width: 410px; }
.pinned button { position: relative; display: grid; place-items: center; height: 28px; }
.pinned svg { width: 17px; height: 17px; }
.open::after { content: ""; position: absolute; bottom: 1px; width: 4px; height: 2px; border-radius: 1px; background: #a2adba; }
.selected { border-radius: 4px; background: #263b50; }
.selected::after { width: 11px; background: #61cbdc; }
.badge { position: absolute; top: 3px; right: 1px; padding: 0 2px; border-radius: 4px; background: #d63b48; color: #fff; font-size: 6px; line-height: 8px; }
.tray { display: flex; align-items: center; justify-content: flex-end; gap: 5px; padding-right: 12px; }
.tray svg { width: 11px; height: 11px; }
.tray .cloud { margin: 0 5px; }
.lang { margin-right: 7px; text-align: center; }
.clock { margin-left: 9px; text-align: right; }

.watermark { position: absolute; top: 19px; right: 124px; color: #49b06b; font: 500 15px/20px "Open Sans", "Noto Sans", sans-serif; }
.pointer { position: absolute; top: 12px; left: 590px; width: 32px; height: 32px; pointer-events: none; }
.click-hint { position: absolute; bottom: 0; left: 0; width: 38px; height: 38px; }
```
